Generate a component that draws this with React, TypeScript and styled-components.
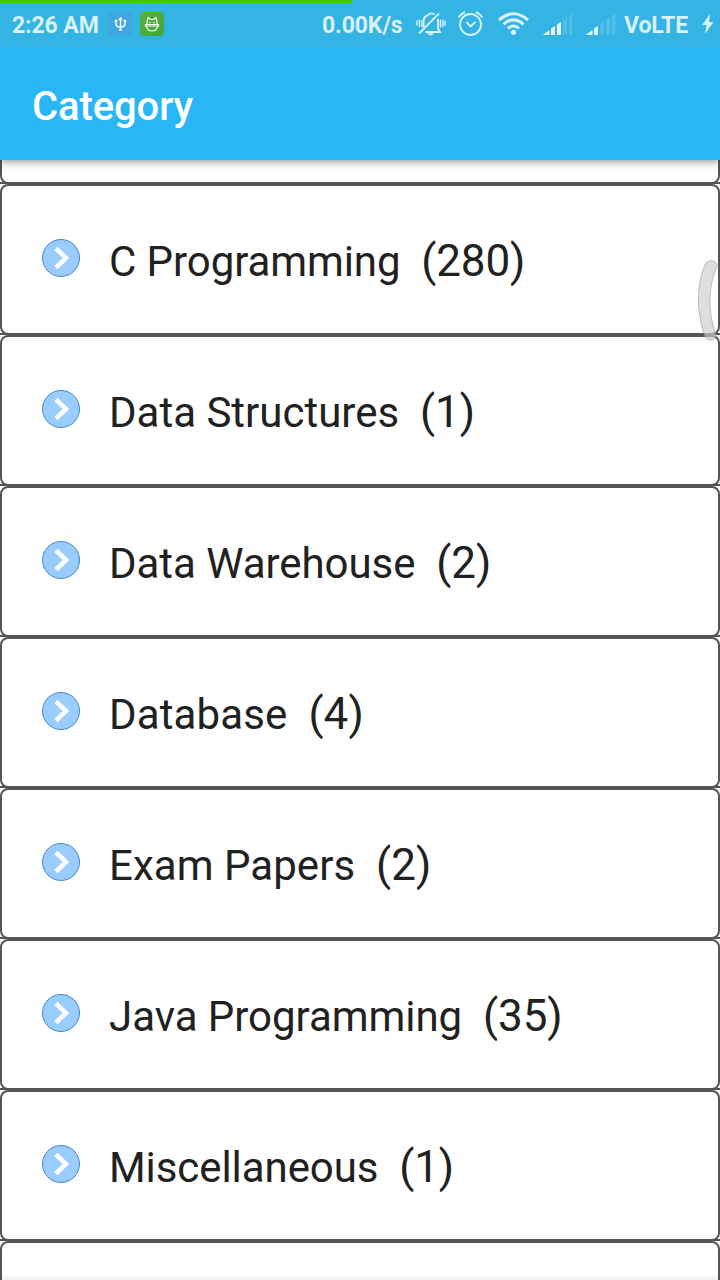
import React from "react";
import styled, { createGlobalStyle } from "styled-components";

const Global = createGlobalStyle`
  * { box-sizing: border-box; }
  body { margin: 0; background: #fff; overflow: hidden; font-family: Roboto, "Liberation Sans", sans-serif; }
`;
const Screen = styled.div`
  position: relative;
  width: 720px;
  height: 1280px;
  overflow: hidden;
  background: #fff;
  display: flex;
  flex-direction: column;
`;
const StatusBar = styled.header`
  position: relative;
  z-index: 2;
  flex: none;
  height: 48px;
  padding: 4px 6px 0 12px;
  background: #34b4e5;
  color: #d9f1fb;
  display: flex;
  align-items: center;
`;
const Progress = styled.div`
  position: absolute;
  left: 0;
  top: 0;
  width: 352px;
  height: 3px;
  background: #46c800;
`;
const StatusText = styled.span<{ $width: number; $gap: number }>`
  width: ${(p) => p.$width}px;
  margin-right: ${(p) => p.$gap}px;
  font-size: 23px;
  font-weight: 700;
  line-height: 28px;
  letter-spacing: -0.1px;
  white-space: nowrap;
`;
const Badge = styled.span<{ $bg: string; $gap: number }>`
  width: 24px;
  height: 24px;
  margin: -4px ${(p) => p.$gap}px 0 0;
  border-radius: 4px;
  background: ${(p) => p.$bg};
  display: flex;
`;
const Glyph = styled.svg<{ $gap?: number }>`
  display: block;
  flex: none;
  margin: -4px ${(p) => p.$gap ?? 0}px 0 0;
`;
const AppBar = styled.div`
  position: relative;
  z-index: 1;
  flex: none;
  height: 112px;
  padding: 6px 32px 0;
  background: #29b6f6;
  box-shadow: 0 2px 8px rgba(0, 0, 0, 0.4);
  display: flex;
  align-items: center;
`;
const Title = styled.h1`
  margin: 0;
  color: #fff;
  font-size: 40px;
  font-weight: 500;
  line-height: 48px;
  letter-spacing: -0.1px;
`;
const List = styled.ul`
  list-style: none;
  margin: -127px 0 0;
  padding: 0;
  flex: none;
`;
const Row = styled.li`
  height: 151px;
  background: linear-gradient(#555, #555) bottom / 100% 2px no-repeat;
`;
const Card = styled.div`
  height: 151px;
  border: 2px solid #555;
  border-radius: 8px;
  background: #fff;
  padding: 0 0 1px 40px;
  display: flex;
  align-items: center;
`;
const Arrow = styled.svg`
  flex: none;
  display: block;
  margin: -3px 29px 0 0;
`;
const Name = styled.span<{ $tracking: number }>`
  color: #212121;
  font-size: 42px;
  line-height: 50px;
  letter-spacing: ${(p) => p.$tracking}px;
  white-space: pre;
  padding-top: 4px;
`;
const Count = styled.span`
  color: #212121;
  font-size: 44px;
`;
const Handle = styled.svg`
  position: absolute;
  z-index: 3;
  left: 696px;
  top: 258px;
`;
const BottomShade = styled.div`
  position: absolute;
  left: 0;
  bottom: 0;
  width: 100%;
  height: 6px;
  background: linear-gradient(rgba(0, 0, 0, 0), rgba(0, 0, 0, 0.06));
`;

const categories: { name: string; count: number; tracking: number }[] = [
  { name: "C Programming", count: 280, tracking: -0.08 },
  { name: "Data Structures", count: 1, tracking: 0 },
  { name: "Data Warehouse", count: 2, tracking: -0.05 },
  { name: "Database", count: 4, tracking: 0.12 },
  { name: "Exam Papers", count: 2, tracking: 0.04 },
  { name: "Java Programming", count: 35, tracking: -0.04 },
  { name: "Miscellaneous", count: 1, tracking: -0.07 },
];

const bars = [
  "M-.5 22.500 6.500 18v4.500z",
  "M8 16.500 12 14v8.500H8z",
  "M14 12.500 18 10v12.500h-4z",
  "M20 8 24 5.500v17h-4z",
  "M26 4 29.500 2v20.500H26z",
];

const levels: Record<number, string[]> = {
  3: ["M-.5 23 6.500 18v5z", "M8 16.500 12 14v9H8z", "M14 12.500 18 10v13h-4z"],
  2: ["M-.5 23 6.500 18v5z", "M8 16.500 12 14v9H8z"],
};

const Signal = ({ level, gap }: { level: number; gap: number }) => (
  <Glyph $gap={gap} width="30" height="24" viewBox="0 0 30 24" fill="#e2f5fc">
    {levels[level].map((d) => (
      <path key={d} d={d} />
    ))}
    {bars.slice(level).map((d) => (
      <path key={d} d={d} opacity={0.18} />
    ))}
  </Glyph>
);

export default function App() {
  return (
    <Screen>
      <Global />
      <StatusBar>
        <Progress />
        <StatusText $width={86} $gap={10}>2:26 AM</StatusText>
        <Badge $bg="#3ea6e2" $gap={8}>
          <svg width="24" height="24" viewBox="0 0 24 24" fill="none" stroke="#fff" strokeWidth="1.400">
            <path d="M12.500 6v12M8 9v3q0 3 4.500 3T17 11.500V9" />
            <path d="M10.500 8 12.500 5l2 3zM7 8h2v2H7zM16 8h2v2h-2zM11.500 17h2v1.500h-2z" fill="#fff" strokeWidth=".5" />
          </svg>
        </Badge>
        <Badge $bg="linear-gradient(135deg, #5cb139, #3aa83c)" $gap={158}>
          <svg width="24" height="24" viewBox="0 0 24 24" fill="none" stroke="#fff" strokeWidth="1.200">
            <path d="M7 12.500V9.500L8 5.500l2.500 2h3l2.500-2 1 4v3M5.500 12.500h13v1.500h-13zM6.500 14q.5 5 5.500 5t5.500-5M10 9.800v1.500M14 9.800v1.500" />
          </svg>
        </Badge>
        <StatusText $width={82} $gap={12}>0.00K/s</StatusText>
        <Glyph $gap={12} width="30" height="26" viewBox="0 0 30 26" fill="none" stroke="#d9f1fb" strokeWidth="1.900">
          <path d="M3 22.500 23 2.500M7.500 16.500V11q0-5.500 4.500-7 3-3 6.500-.5M22 8v9.500l2 3.500H9.500" />
          <path d="M1 9.500v5M3.500 8.500v7.500M6 9v7M24.500 8.500v8M27 8.500v7.500M29 9.500v5" strokeWidth="1.400" />
          <path d="M11.500 22.500h6l-1.500 1.500h-3z" fill="#d9f1fb" strokeWidth=".5" />
        </Glyph>
        <Glyph $gap={12} width="28" height="26" viewBox="0 0 28 26" fill="none" stroke="#d9f1fb" strokeWidth="1.900">
          <circle cx="12.500" cy="13.500" r="10.500" />
          <path d="m8.500 11 4 4.500 5-4.500M.5 6.500Q3 2.500 7 1M18 1q4 1.500 6.500 5.500" />
        </Glyph>
        <Glyph $gap={14} width="31" height="24" viewBox="0 0 31 24" fill="none" stroke="#d9f1fb" strokeWidth="3">
          <path d="M1 8Q15.500-4.500 30 8M5.500 12.300Q15.500 3.500 25.500 12.300M10 16.500Q15.500 11.500 21 16.500" />
          <circle cx="15.500" cy="20.300" r="2.600" fill="#d9f1fb" stroke="none" />
        </Glyph>
        <Signal level={3} gap={13} />
        <Signal level={2} gap={8} />
        <StatusText $width={65} $gap={13}>VoLTE</StatusText>
        <Glyph width="12" height="20" viewBox="0 0 12 20" fill="#d9f1fb">
          <path d="M8 0 0 11h4.500L3 20 11.500 8H7z" />
        </Glyph>
      </StatusBar>
      <AppBar><Title>Category</Title></AppBar>
      <List>
        <Row><Card /></Row>
        {categories.map(({ name, count, tracking }) => (
          <Row key={name}>
            <Card>
              <Arrow width="38" height="38" viewBox="0 0 38 38">
                <circle cx="19" cy="19" r="18.500" fill="#99ccff" stroke="#4387cc" />
                <path d="m14 9.500 10 9.500-10 9.500" fill="none" stroke="#fff" strokeWidth="4.500" />
              </Arrow>
              <Name $tracking={tracking}>{name}{"  "}<Count>({count})</Count></Name>
            </Card>
          </Row>
        ))}
        <Row><Card /></Row>
      </List>
      <BottomShade />
      <Handle width="24" height="84" viewBox="0 0 24 84" fill="none">
        <path d="M9.200 6.500C10.700 1 22.500 1 20.700 9.500C12.500 28 11.500 52 19.500 76C20.500 83 11.500 84 9.300 78.500C.5 57-.2 27 9.200 6.500Z" fill="#ccc" fillOpacity=".65" stroke="#999" strokeOpacity=".6" />
      </Handle>
    </Screen>
  );
}
